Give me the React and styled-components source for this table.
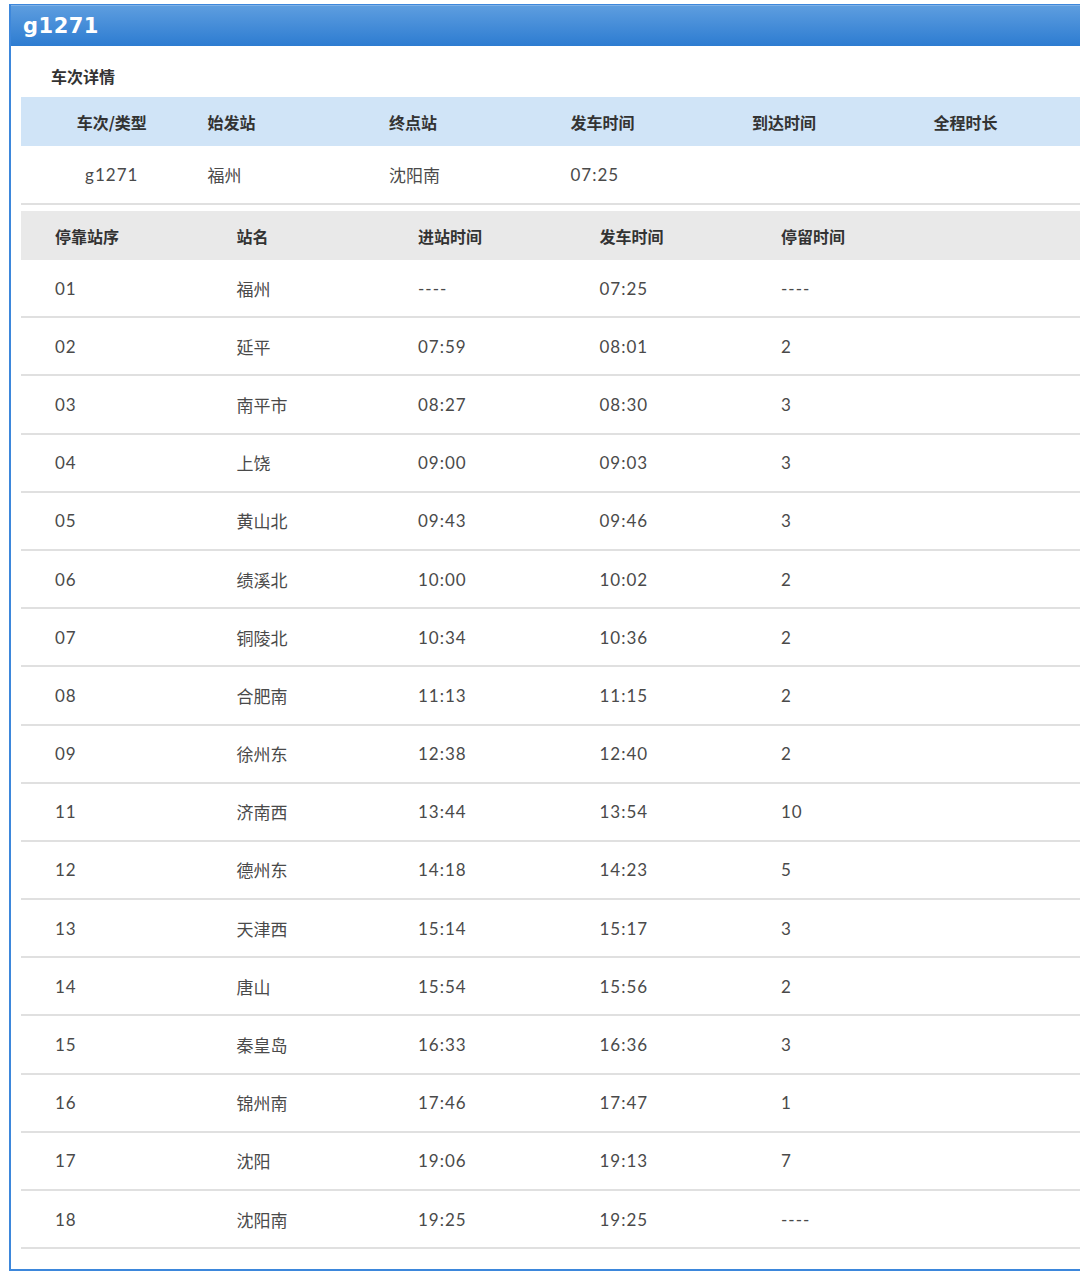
import React from 'react';
import styled, { createGlobalStyle } from 'styled-components';

const GlobalStyle = createGlobalStyle`
  html, body {
    margin: 0;
    padding: 0;
    background: #fff;
    overflow: hidden;
  }
  body {
    font-family: Lato, "Noto Sans", "Noto Sans CJK SC", sans-serif;
    color: #444;
  }
`;

const Page = styled.div`
  padding: 4px 0 0 9px;
  width: 1100px;
`;

const Panel = styled.div`
  border: 2px solid #3d87db;
  border-top: 1px solid #3d87db;
  border-right: none;
  padding-bottom: 20px;
`;

const TitleBar = styled.div`
  height: 40px;
  background: linear-gradient(#5d9ddf, #2d7cd1);
  border-top: 1px solid #7fb1e6;
  display: flex;
  align-items: center;
  padding-left: 12px;
  color: #fff;
  font-family: "DejaVu Sans", Verdana, sans-serif;
  font-weight: bold;
  font-size: 21px;
  letter-spacing: 0.5px;
`;

const Body = styled.div`
  padding: 0 0 0 10px;
`;

const Caption = styled.div`
  font-family: "Noto Sans CJK SC", sans-serif;
  font-weight: 700;
  font-size: 16px;
  color: #333;
  height: 51px;
  display: flex;
  align-items: center;
  padding: 8px 0 0 30px;
  box-sizing: border-box;
`;

const Table = styled.table`
  border-collapse: collapse;
  table-layout: fixed;
  width: ${p => p.$cols * 181.5}px;
  margin-bottom: ${p => p.$gap || 0}px;
`;

const Th = styled.th`
  background: ${p => (p.$tone === 'blue' ? '#d0e4f7' : '#e9e9e9')};
  height: 49px;
  padding: 0 0 0 ${p => p.$pad}px;
  text-align: ${p => (p.$center ? 'center' : 'left')};
  font-family: "Noto Sans CJK SC", sans-serif;
  font-weight: 700;
  font-size: 16px;
  color: #333;
`;

const Td = styled.td`
  height: ${p => p.$h}px;
  padding: 0 0 0 ${p => p.$pad}px;
  text-align: ${p => (p.$center ? 'center' : 'left')};
  border-bottom: 2px solid #e0e0e0;
  font-size: 17px;
  font-weight: 400;
  letter-spacing: ${p => (p.$num ? '1px' : '0')};
  color: #4a4a4a;
  font-family: Lato, "Noto Sans CJK SC", sans-serif;
`;

const trainHead = ['车次/类型', '始发站', '终点站', '发车时间', '到达时间', '全程时长'];
const trainRow = ['g1271', '福州', '沈阳南', '07:25', '', ''];

const stopHead = ['停靠站序', '站名', '进站时间', '发车时间', '停留时间', ''];
const stops = [
  ['01', '福州', '----', '07:25', '----'],
  ['02', '延平', '07:59', '08:01', '2'],
  ['03', '南平市', '08:27', '08:30', '3'],
  ['04', '上饶', '09:00', '09:03', '3'],
  ['05', '黄山北', '09:43', '09:46', '3'],
  ['06', '绩溪北', '10:00', '10:02', '2'],
  ['07', '铜陵北', '10:34', '10:36', '2'],
  ['08', '合肥南', '11:13', '11:15', '2'],
  ['09', '徐州东', '12:38', '12:40', '2'],
  ['11', '济南西', '13:44', '13:54', '10'],
  ['12', '德州东', '14:18', '14:23', '5'],
  ['13', '天津西', '15:14', '15:17', '3'],
  ['14', '唐山', '15:54', '15:56', '2'],
  ['15', '秦皇岛', '16:33', '16:36', '3'],
  ['16', '锦州南', '17:46', '17:47', '1'],
  ['17', '沈阳', '19:06', '19:13', '7'],
  ['18', '沈阳南', '19:25', '19:25', '----'],
];

export default function App() {
  return (
    <Page>
      <GlobalStyle />
      <Panel>
        <TitleBar>g1271</TitleBar>
        <Body>
          <Caption>车次详情</Caption>
          <Table $cols={6} $gap={6}>
            <thead>
              <tr>
                {trainHead.map((h, i) => (
                  <Th key={h} $tone="blue" $center={i === 0} $pad={i === 0 ? 0 : 5}>{h}</Th>
                ))}
              </tr>
            </thead>
            <tbody>
              <tr>
                {trainRow.map((c, i) => (
                  <Td key={i} $h={57} $num={i === 0 || i === 3} $center={i === 0} $pad={i === 0 ? 0 : 5}>{c}</Td>
                ))}
              </tr>
            </tbody>
          </Table>
          <Table $cols={6}>
            <thead>
              <tr>
                {stopHead.map((h, i) => (
                  <Th key={i} $pad={34}>{h}</Th>
                ))}
              </tr>
            </thead>
            <tbody>
              {stops.map(row => (
                <tr key={row[0]}>
                  {row.map((c, i) => (
                    <Td key={i} $h={56.2} $num={i !== 1} $pad={34}>{c}</Td>
                  ))}
                  <Td $h={56.2} $pad={34} />
                </tr>
              ))}
            </tbody>
          </Table>
        </Body>
      </Panel>
    </Page>
  );
}
